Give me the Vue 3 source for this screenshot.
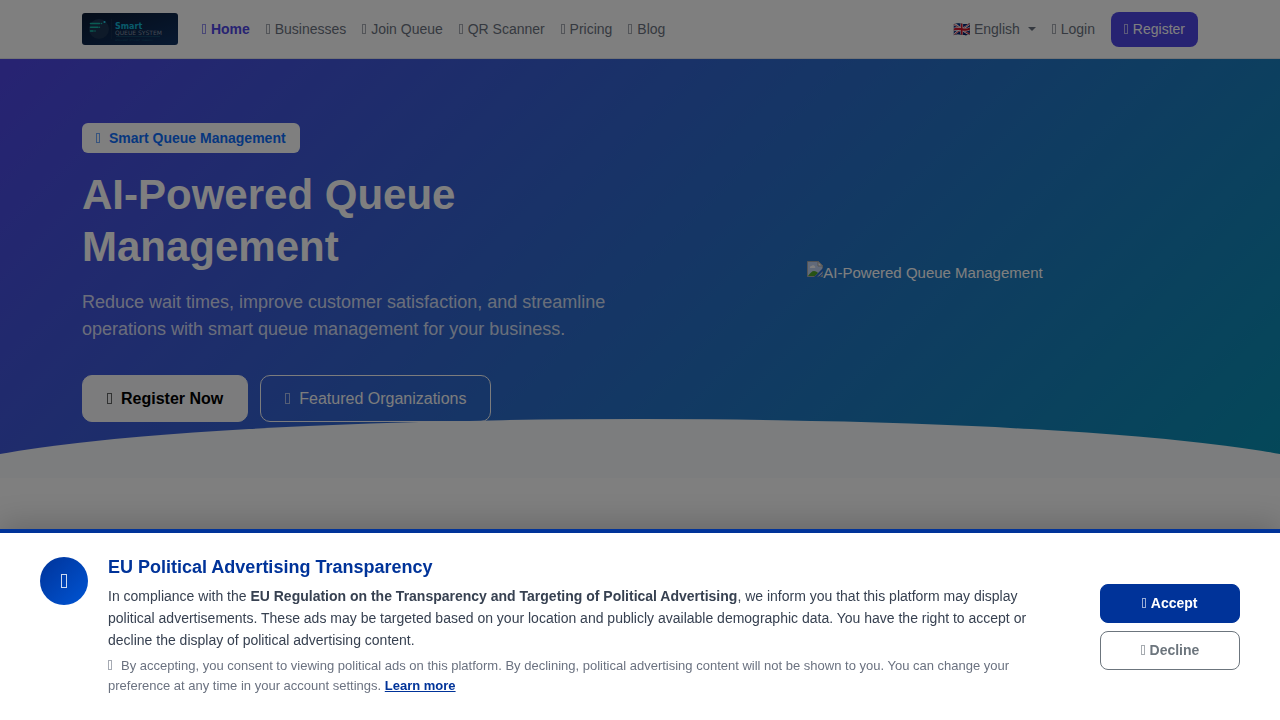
<template>
  <div class="page">

    <!-- top navigation -->
    <header class="navbar">
      <div class="container nav-row">
        <a href="#" class="brand" aria-label="Smart Queue System">
          <svg class="logo" viewBox="0 0 96 32">
            <defs>
              <linearGradient id="logoBg" x1="0" y1="0" x2="1" y2="1">
                <stop offset="0" stop-color="#0a1a33" />
                <stop offset="1" stop-color="#0f3263" />
              </linearGradient>
            </defs>
            <rect width="96" height="32" rx="3" fill="url(#logoBg)" />
            <circle cx="17" cy="16" r="10" fill="#1c3453" />
            <g stroke="#14b8a6" stroke-width="1.6" stroke-linecap="round">
              <path d="M8.5 10.5h9M8.5 14.2h7.5M8.5 18h2.500" />
            </g>
            <g fill="#14b8a6">
              <circle cx="19.500" cy="10.500" r="0.800" />
              <circle cx="17.500" cy="14.200" r="0.700" />
              <circle cx="13" cy="18" r="0.800" />
              <circle cx="22.500" cy="9" r="1.100" fill="#22d3ee" />
            </g>
            <path d="M29.500 6v20" stroke="#1c3453" stroke-width="0.500" />
            <text x="33" y="16" class="logo-name">Smart</text>
            <text x="33" y="22" class="logo-sub">QUEUE SYSTEM</text>
            <path d="M34 23.500h44" stroke="#17617c" stroke-width="0.500" />
            <text x="33" y="27.500" class="logo-tag">INTELLIGENT · EFFICIENT · SEAMLESS</text>
          </svg>
        </a>
        <nav class="nav-links">
          <a v-for="l in links" :key="l.label" href="#" :class="{ active: l.active }">
            <i class="icon"></i> {{ l.label }}
          </a>
        </nav>
        <div class="nav-links nav-right">
          <button class="lang-btn">🇬🇧 English <span class="caret"></span></button>
          <a href="#"><i class="icon"></i> Login</a>
          <a href="#" class="register-btn"><i class="icon"></i> Register</a>
        </div>
      </div>
    </header>

    <!-- hero -->
    <section class="hero">
      <div class="container hero-row">
        <div class="hero-text">
          <span class="badge"><i class="icon spaced"></i>Smart Queue Management</span>
          <h1>AI-Powered Queue Management</h1>
          <p>Reduce wait times, improve customer satisfaction, and streamline operations with smart queue management for your business.</p>
          <div class="hero-actions">
            <a href="#" class="btn btn-light"><i class="icon spaced"></i>Register Now</a>
            <a href="#" class="btn btn-outline"><i class="icon spaced"></i>Featured Organizations</a>
          </div>
        </div>
        <div class="hero-image">
          <svg class="missing" viewBox="0 0 16 16">
            <path d="M0.500 0.500h11l4 4v11h-15z" fill="#c3d5f5" stroke="#a8a8a8" />
            <path d="M11 0.500v4.500h4.500z" fill="#fff" stroke="#a8a8a8" />
            <path d="M3 7a1.500 1.500 0 0 1 1.500-2 2 2 0 0 1 3.500 0.500 1 1 0 0 1 0 1.500z" fill="#fff" />
            <path d="M1 15c2-3 4-5 6-5 2 0 3 1 4 2l-3 3z" fill="#4fa52b" />
            <path d="M7 16l9-9v3l-6 6zM11 16l5-4v1l-3 3z" fill="#2b6bcb" />
          </svg>
          <span>AI-Powered Queue Management</span>
        </div>
      </div>
      <div class="curve"></div>
    </section>

    <div class="backdrop"></div>

    <!-- political ads consent -->
    <section class="consent">
      <div class="consent-icon"><i class="icon large"></i></div>
      <div class="consent-text">
        <h2>EU Political Advertising Transparency</h2>
        <p>
          In compliance with the <strong>EU Regulation on the Transparency and Targeting of Political Advertising</strong>,
          we inform you that this platform may display political advertisements. These ads may be targeted based on your
          location and publicly available demographic data. You have the right to accept or decline the display of
          political advertising content.
        </p>
        <p class="note">
          <i class="icon spaced"></i>By accepting, you consent to viewing political ads on this platform. By declining,
          political advertising content will not be shown to you. You can change your preference at any time in your
          account settings. <a href="#">Learn more</a>
        </p>
      </div>
      <div class="consent-actions">
        <button class="accept"><i class="icon"></i> Accept</button>
        <button class="decline"><i class="icon"></i> Decline</button>
      </div>
    </section>

  </div>
</template>

<script setup>
//main menu entries
const links = [
  { label: 'Home', active: true },
  { label: 'Businesses' },
  { label: 'Join Queue' },
  { label: 'QR Scanner' },
  { label: 'Pricing' },
  { label: 'Blog' }
];
</script>

<style>
body { margin: 0; background: #fff; }
</style>

<style scoped>
.page {
  font-family: "Liberation Sans", Arial, sans-serif;
  font-size: 15px;
  line-height: 24px;
  color: #374151;
}

.page *, .page *::before, .page *::after { box-sizing: border-box; }

a { text-decoration: none; color: inherit; }

button { font-family: inherit; cursor: pointer; }

/* narrow outlined box in front of a label */
.icon {
  display: inline-block;
  width: 4px;
  height: 10px;
  margin-right: 1px;
  border: 1px solid;
  opacity: 0.6;
}

.icon.spaced { margin-right: 9px; }
.icon.large { width: 6px; height: 14px; margin: 0; opacity: 0.8; }

.container {
  width: 100%;
  max-width: 1140px;
  margin: 0 auto;
  padding: 0 12px;
}

.navbar {
  background: #fff;
  border-bottom: 1px solid #e5e7eb;
}

.nav-row {
  display: flex;
  align-items: center;
  gap: 24px;
  min-height: 58px;
}

.brand { display: flex; }

.logo { width: 96px; height: 32px; }
.logo-name { font: bold 8px "DejaVu Sans", sans-serif; fill: #12b5d6; }
.logo-sub { font: 6px "DejaVu Sans", sans-serif; fill: #8793a5; }
.logo-tag { font: 2px "DejaVu Sans", sans-serif; fill: #17617c; }

.nav-links {
  display: flex;
  align-items: center;
  gap: 16px;
  font-size: 14px;
  color: #6b7280;
}

.nav-links .active { color: #4f46e5; font-weight: bold; }

.nav-right { margin-left: auto; }

.lang-btn {
  display: flex;
  align-items: center;
  gap: 4px;
  padding: 0;
  border: none;
  background: none;
  font-size: 14px;
  color: inherit;
}

.caret {
  margin-left: 4px;
  border-top: 4px solid;
  border-left: 4px solid transparent;
  border-right: 4px solid transparent;
}

.nav-links .register-btn {
  padding: 6px 13px;
  line-height: 23px;
  border-radius: 8px;
  background: #4f46e5;
  color: #fff;
}

.hero {
  position: relative;
  overflow: hidden;
  padding: 64px 0 56px;
  background: linear-gradient(135deg, #4f46e5, #0891b2);
  color: #fff;
}

.hero-row {
  display: grid;
  grid-template-columns: 1fr 1fr;
  align-items: center;
  gap: 24px;
}

.badge {
  display: inline-block;
  padding: 0 14px;
  line-height: 30px;
  border-radius: 6px;
  background: #fff;
  color: #0d6efd;
  font-size: 14px;
  font-weight: bold;
}

h1 {
  margin: 16px 0;
  font-size: 42px;
  line-height: 52px;
}

.hero-text p {
  margin: 0 0 32px;
  font-size: 18px;
  line-height: 27px;
  color: rgba(255, 255, 255, 0.8);
}

.hero-actions { display: flex; gap: 12px; }

.btn {
  padding: 10px 24px;
  border: 1px solid #f8f9fa;
  border-radius: 10px;
  font-size: 16px;
  line-height: 25px;
}

.btn .icon { width: 5px; height: 11px; }

.btn-light { background: #f8f9fa; color: #000; font-weight: bold; }
.btn-outline { color: #f8f9fa; }

.hero-image {
  display: flex;
  justify-content: center;
  align-items: flex-start;
}

.missing { width: 16px; height: 16px; }

.curve {
  position: absolute;
  bottom: -1px;
  left: -5%;
  width: 110%;
  height: 60px;
  border-radius: 50% 50% 0 0 / 100% 100% 0 0;
  background: #f8fafc;
}

.backdrop {
  position: fixed;
  inset: 0;
  background: rgba(0, 0, 0, 0.5);
}

.consent {
  position: fixed;
  left: 0;
  right: 0;
  bottom: 0;
  display: flex;
  align-items: flex-start;
  gap: 20px;
  padding: 24px 40px;
  border-top: 4px solid #003399;
  background: #fff;
  box-shadow: 0 -4px 30px rgba(0, 0, 0, 0.2);
}

.consent-icon {
  display: flex;
  align-items: center;
  justify-content: center;
  flex: none;
  width: 48px;
  height: 48px;
  border-radius: 50%;
  background: linear-gradient(135deg, #003399, #0055d4);
  color: #fff;
}

.consent-text { flex: 1; padding-right: 20px; }

.consent-text h2 {
  margin: 0 0 8px;
  font-size: 18px;
  line-height: 20px;
  color: #003399;
}

.consent-text p {
  margin: 0 0 5px;
  font-size: 14px;
  line-height: 22px;
}

.consent-text .note {
  margin: 0;
  font-size: 13px;
  line-height: 20px;
  color: #6b7280;
}

.note a { color: #003399; font-weight: bold; text-decoration: underline; }

.consent-actions {
  display: flex;
  flex-direction: column;
  align-self: center;
  gap: 8px;
  width: 140px;
}

.consent-actions button {
  height: 39px;
  border: 1px solid #003399;
  border-radius: 8px;
  background: #003399;
  color: #fff;
  font-size: 14px;
  font-weight: bold;
}

.consent-actions .decline {
  border-color: #6c757d;
  background: #fff;
  color: #6c757d;
}
</style>
